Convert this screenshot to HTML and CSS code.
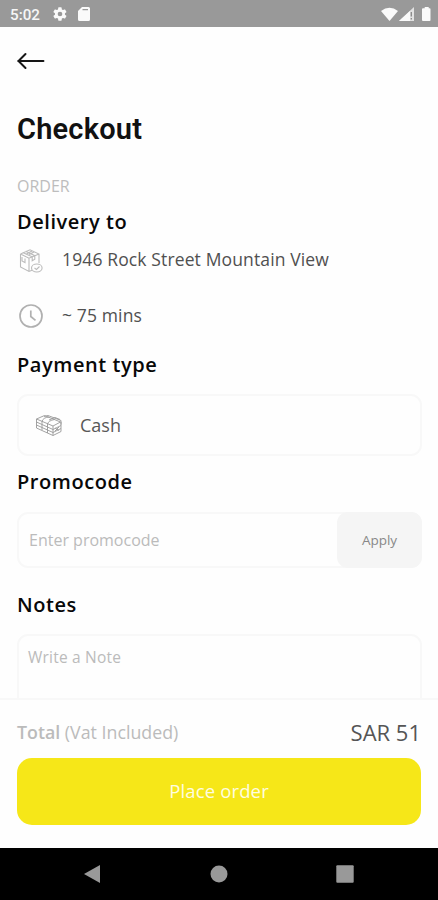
FILE: index.html
```html
<!DOCTYPE html>
<html lang="en">
<head>
<meta charset="utf-8">
<title>Checkout</title>
<link rel="stylesheet" href="styles.css">
</head>
<body>
<div class="screen">
  <div class="status">
    <span class="clock">5:02</span>
    <svg class="gear" viewBox="0 0 24 24"><path d="M19.4 13a7.500 7.500 0 0 0 0-2l2.100-1.600a.5.5 0 0 0 .1-.6l-2-3.500a.5.5 0 0 0-.6-.2l-2.500 1a7.500 7.500 0 0 0-1.700-1l-.4-2.600a.5.5 0 0 0-.5-.5h-4a.5.5 0 0 0-.5.500L9 5.100a7.500 7.500 0 0 0-1.700 1l-2.500-1a.5.5 0 0 0-.6.200l-2 3.500a.5.5 0 0 0 .1.600L4.500 11a7.500 7.500 0 0 0 0 2l-2.200 1.600a.5.5 0 0 0-.1.600l2 3.500c.1.200.4.300.6.200l2.500-1a7.500 7.500 0 0 0 1.700 1l.4 2.600c0 .3.300.5.500.5h4c.3 0 .5-.2.500-.5l.4-2.600a7.500 7.500 0 0 0 1.700-1l2.500 1c.2.100.5 0 .6-.2l2-3.500a.5.5 0 0 0-.1-.6zM12 15.500a3.500 3.500 0 1 1 0-7 3.500 3.500 0 0 1 0 7z"/></svg>
    <svg class="sd" viewBox="0 0 12 14"><path fill-rule="evenodd" d="M4 0h6.500A1.500 1.500 0 0 1 12 1.500v11a1.500 1.500 0 0 1-1.500 1.500h-9A1.500 1.500 0 0 1 0 12.500V4zM4.500 2v1.200H10V2z"/></svg>
    <svg class="signals" viewBox="0 0 52 18">
      <path d="M0 5Q8.500-1.500 17 5L8.500 15z"/>
      <path d="M33 1v14H18z" opacity=".75"/><path d="M29 5v10H18z"/><path class="bang" d="M30.300 6v4.500M30.300 12v1.500"/>
      <path d="M42 2.200h1.700V1h4v1.200h1q.8 0 .8.800v11q0 1-.8 1H42q-1 0-1-1V3q0-.8 1-.8z"/>
    </svg>
  </div>
  <main class="content">
    <svg class="back" viewBox="0 0 28 18"><path d="M1.500 9H26.500" stroke-width="1.900"/><path d="M8.500 2 1.500 9 8.500 16" stroke-width="2"/></svg>
    <h1>Checkout</h1>
    <p class="eyebrow"><span>ORDER</span></p>
    <h2 class="h-delivery">Delivery to</h2>
    <div class="info address">
      <svg viewBox="0 0 26 26"><path d="M2.500 6 12 1.800 21 6v9M2.500 6v13L11 23.500l3-1.200M2.500 6 11 10.200 21 6M11 10.200v13.300M4.700 4.600l9.500 4.200v4l2.600-1.500V7.700L7.600 3.200M8 6.200l6-3.300M4 9v4l3 1.500v-4M11 6.500l5-2.500"/><ellipse cx="18.800" cy="20" rx="5.300" ry="4"/><path d="M16.500 20l2 1.500 3-3"/></svg>
      <span class="t-address">1946 Rock Street Mountain View</span>
    </div>
    <div class="info eta">
      <svg class="dial" viewBox="0 0 26 26"><circle cx="13" cy="13" r="11"/><path d="M12.800 7.500v6l4.700 3.800"/></svg>
      <span class="t-eta">~ 75 mins</span>
    </div>
    <h2 class="h-payment">Payment type</h2>
    <div class="box payment">
      <svg viewBox="0 0 28 24"><path d="M1.500 5 9.500 1.500 25.500 8 18 12zM1.500 5v9l16.500 7.500 8-4V8M18 12v9.500M1.500 8 18 15.500l8-4M1.500 11 18 18.500l8-4M7 7.500q1-4 7-4.500M12.500 10q1-3.500 7-4.500M7 7.500V16M12.500 10v9M9 2.500l4-1 13 5v4M14 6l6-2.500 5 2M20 14l4 2.500M20 17l4-4"/></svg>
      <span>Cash</span>
    </div>
    <h2 class="h-promo">Promocode</h2>
    <div class="box promo"><span class="placeholder">Enter promocode</span><span class="apply"><span>Apply</span></span></div>
    <h2 class="h-notes">Notes</h2>
    <div class="box notes"><span class="placeholder">Write a Note</span></div>
  </main>
  <footer class="summary">
    <div class="total"><span class="label"><b>Total</b> (Vat Included)</span><span class="amount">SAR 51</span></div>
    <div class="order"><span>Place order</span></div>
  </footer>
  <nav class="nav">
    <svg viewBox="0 0 18 20"><path d="M17 1v18L1 10z"/></svg>
    <svg viewBox="0 0 18 20"><circle cx="9" cy="10" r="8.500"/></svg>
    <svg viewBox="0 0 18 20"><rect x=".3" y="1.300" width="17.400" height="17.400" rx="1"/></svg>
  </nav>
</div>
</body>
</html>
```
FILE: styles.css
```css
* { box-sizing: border-box; }
body { margin: 0; background: #fefefe; font-family: "Open Sans", sans-serif; }
h1, h2, p { margin: 0; }
svg { display: block; flex: none; }
span { white-space: nowrap; }
.screen { width: 438px; height: 900px; display: flex; flex-direction: column; overflow: hidden; }

.status { flex: none; height: 27px; background: #999; display: flex; align-items: center; padding: 2px 7px 0 10px; color: #f6f6f6; fill: #fafafa; }
.clock { font: 500 15.200px/24px Roboto, sans-serif; width: 42px; }
.gear { width: 16px; height: 16px; margin: -1px 10px 0 0; }
.sd { width: 12px; height: 14px; margin-top: -1px; }
.signals { width: 52px; height: 18px; margin: 0 -2px 0 auto; }
.bang { stroke: #888; stroke-width: 1.300; }

.content { flex: none; height: 671px; padding: 25px 16px 0 17px; overflow: hidden; display: flex; flex-direction: column; }
.content > * { flex: none; }
.back { width: 28px; height: 18px; fill: none; stroke: #161616; stroke-linecap: round; }
h1 { font: 600 29px/40px Roboto, sans-serif; letter-spacing: .2px; color: #111; margin-top: 39px; }
.eyebrow { font-size: 16px; line-height: 20px; color: #bdbdbd; margin-top: 27px; }
h2 { font-size: 20px; line-height: 28px; letter-spacing: .55px; font-weight: 600; color: #080808; }
.h-delivery { margin-top: 12px; }
.info { display: flex; align-items: center; height: 26px; gap: 18px; font-size: 17.500px; letter-spacing: .13px; color: #505050; padding-left: 1px; }
.info svg { width: 26px; height: 26px; fill: none; stroke: #bbb; stroke-width: 1.100; }
.info .dial { stroke: #b0b0b0; stroke-width: 1.700; }
.address { margin-top: 12px; }
.address span { margin-top: -4px; }
.eta { margin-top: 29px; }
.eta span { margin-top: -2px; }
.h-payment { margin-top: 22px; }
.box { border: 2px solid #f8f8f8; border-radius: 11px; display: flex; align-items: center; }
.payment { height: 62px; margin-top: 15px; padding-left: 16px; gap: 17px; font-size: 18px; color: #585858; }
.payment svg { width: 28px; height: 24px; margin-top: 2px; fill: none; stroke: #999; stroke-width: .9; }
.h-promo { margin-top: 12px; }
.promo { height: 56px; margin-top: 16px; padding-left: 10px; font-size: 16px; color: #bbb; }
.apply { margin: -2px -2px -2px auto; width: 85px; height: 56px; background: #f5f5f5; border-radius: 11px; display: flex; align-items: center; justify-content: center; font-size: 13.500px; color: #888; }
.h-notes { margin-top: 23px; }
.notes { height: 100px; margin-top: 15px; padding: 9px 9px 0; align-items: flex-start; font-size: 15.500px; letter-spacing: .2px; line-height: 24px; color: #bbb; }

.summary { flex: none; height: 150px; border-top: 2px solid #f8f8f8; padding: 10px 17px 0; background: #fefefe; }
.total { height: 48px; padding-bottom: 4px; display: flex; justify-content: space-between; align-items: center; }
.label { font-size: 17.800px; color: #bbb; }
.label b { font-weight: 600; }
.amount { font-size: 22px; color: #555; }
.order { height: 67px; background: #f6e718; border-radius: 15px; display: flex; align-items: center; justify-content: center; font-size: 18.500px; letter-spacing: .15px; font-weight: 500; color: #fffde0; padding-bottom: 2px; }

.nav { flex: none; height: 52px; background: #000; fill: #999; display: flex; align-items: center; justify-content: space-between; padding: 0 84px 0 83px; }
.nav svg { width: 18px; height: 20px; }
```
